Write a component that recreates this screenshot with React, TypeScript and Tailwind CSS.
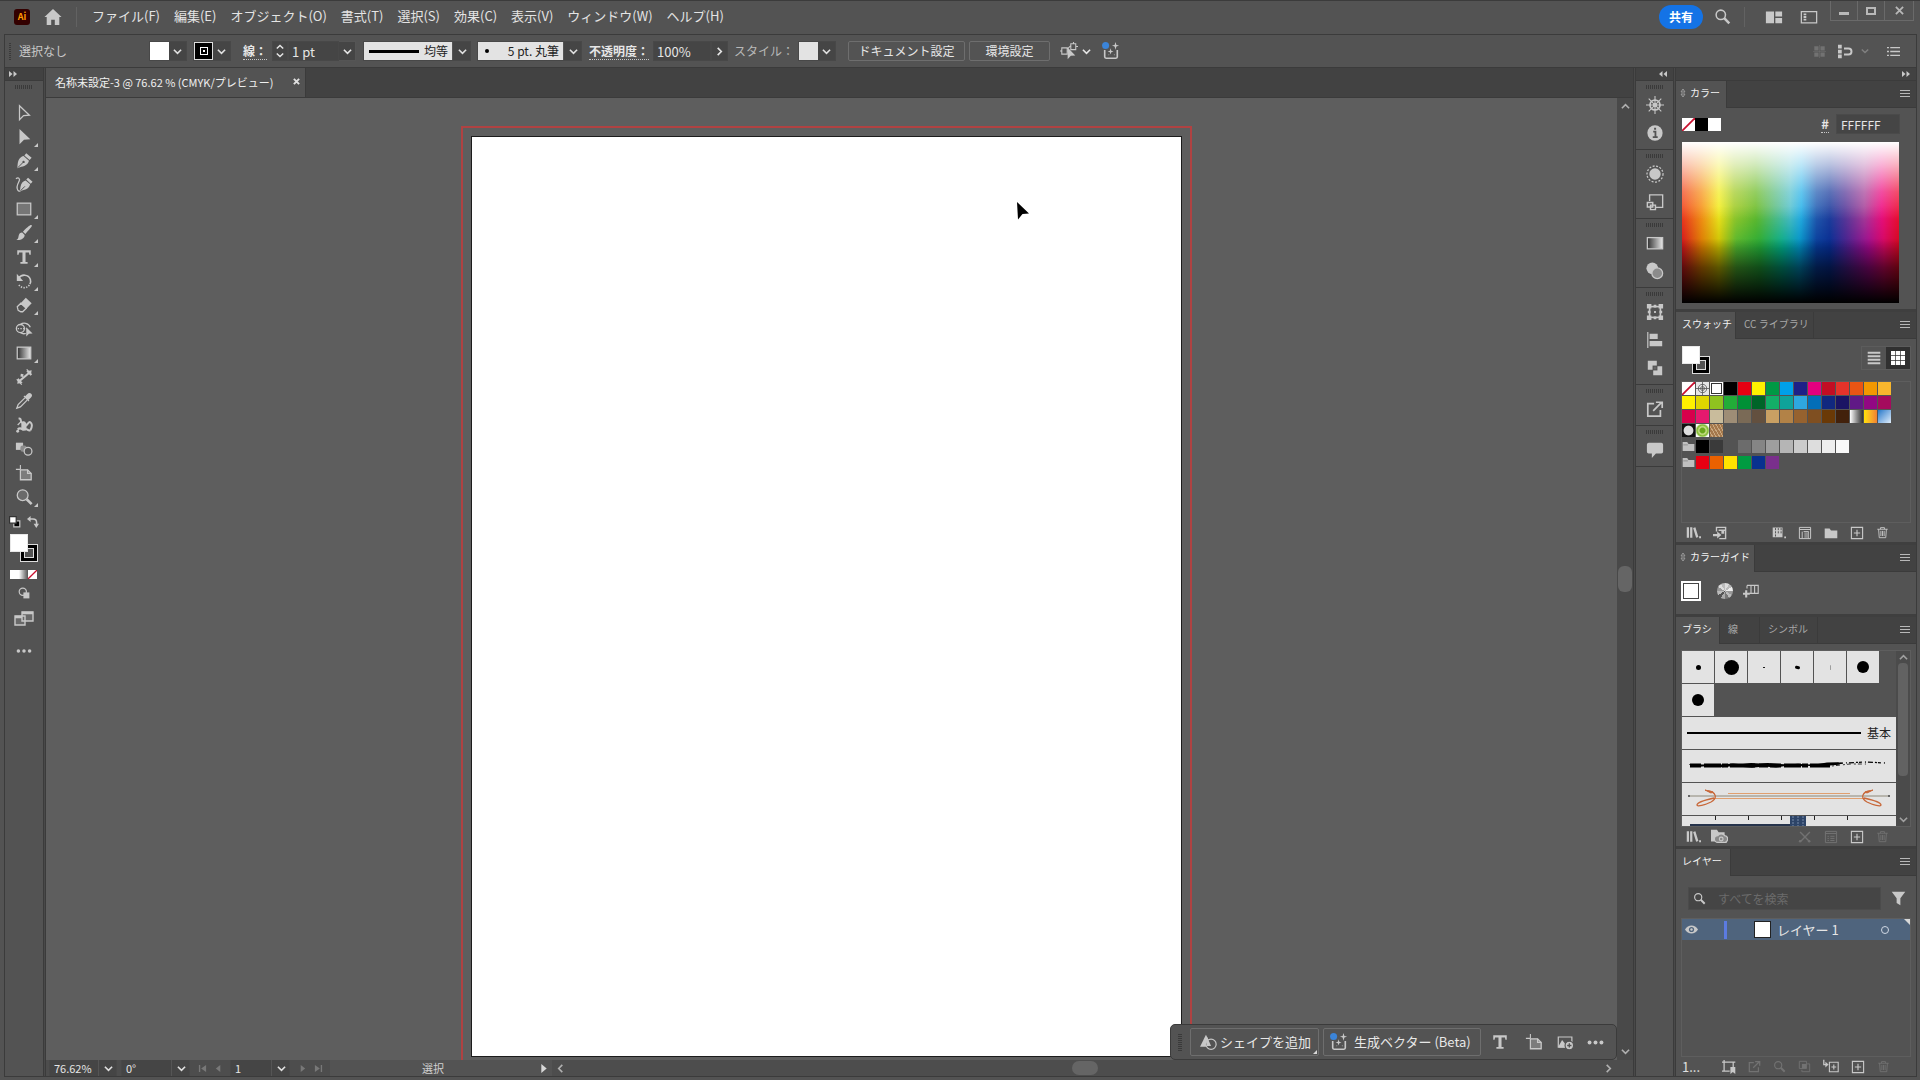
import React from "react";
import clsx from "clsx";

type Children = { children?: React.ReactNode };

/* ---------- icons ---------- */

function Icon({ children, size = 20, className }: Children & { size?: number; className?: string }) {
  return (
    <svg
      viewBox="0 0 20 20"
      width={size}
      height={size}
      fill="none"
      stroke="currentColor"
      strokeWidth="1.4"
      className={clsx("shrink-0", className)}
      aria-hidden="true"
    >
      {children}
    </svg>
  );
}

const solid = { fill: "currentColor", stroke: "none" };

function Chevron({ dir = "down", size = 9 }: { dir?: "down" | "up" | "left" | "right"; size?: number }) {
  const d = {
    down: "M1 3l4 4 4-4",
    up: "M1 7l4-4 4 4",
    left: "M7 1L3 5l4 4",
    right: "M3 1l4 4-4 4",
  }[dir];
  return (
    <svg viewBox="0 0 10 10" width={size} height={size} fill="none" stroke="currentColor" strokeWidth="1.8" className="shrink-0" aria-hidden="true">
      <path d={d} />
    </svg>
  );
}

function DoubleArrow({ left }: { left?: boolean }) {
  return (
    <svg viewBox="0 0 8 6" width="8" height="6" fill="#c8c8c8" aria-hidden="true">
      {left ? <path d="M3.5 0v6L0 3zM8 0v6L4.500 3z" /> : <path d="M0 0l3.500 3L0 6zM4.500 0L8 3 4.500 6z" />}
    </svg>
  );
}

const SearchIcon = (
  <>
    <circle cx="8" cy="8" r="5.5" strokeWidth="1.8" />
    <path d="M12 12l6 6" strokeWidth="3" />
  </>
);
const TypeIcon = <path {...solid} d="M2.500 2.500h15v5H16L15.500 5h-3.800v10.500H14V17.500H6v-2h2.300V5H4.500L4 7.500H2.500z" />;
const ArtboardIcon = (
  <>
    <path d="M6 1v5M1 6h5" strokeWidth="1.200" />
    <path d="M6 6.500h8l4 4v7H6z" fill="#7c7c7c" />
    <path d="M14 6.500v4h4" />
  </>
);
const Generative = (
  <>
    <path d="M3 9v7.500c0 1 .5 1.500 1.500 1.500h11c1 0 1.500-.5 1.500-1.500V9" strokeWidth="1.800" />
    <path {...solid} d="M15 0l1 3.200L19 4l-3 1-1 3.500L14 5l-3-1 3-.8zM9.500 7l.8 2.600 2.500.9-2.500.8-.8 2.700-.8-2.700-2.500-.8 2.500-.9zM7 14l.6 1 .6-1zM13 14l.8 1 .6-1z" />
    <circle cx="4" cy="4" r="3.900" fill="#3b84d8" stroke="none" />
  </>
);
const TrashIcon = (
  <path d="M2 5h16M7 5V2.500h6V5M4 5l1 13h10l1-13M7.500 7.500v8M10 7.500v8M12.500 7.500v8" />
);
const PlusBox = <path d="M2 2h16v16H2zM10 5.500v9M5.500 10h9" strokeWidth="1.600" />;
const FolderIcon = <path {...solid} d="M1 3.500h7l2 3h9v11H1z" />;
const LibraryIcon = (
  <path {...solid} d="M1 3h3v14H1zM5.500 3h3v14h-3zM9.500 4l3-1 4 13-3 1zM17.500 15h2.500v2.500h-2.500z" />
);
const ExportIcon = (
  <path d="M9 4H2v14h14v-7M8 12L17 3M11 2.500h7V9" strokeWidth="1.900" />
);

type Tool = { label: string; flyout?: boolean; art: React.ReactNode };

const tools: Tool[] = [
  { label: "選択ツール", art: <path d="M5 2l11 10.500-6.500.4L5 17.500z" /> },
  { label: "ダイレクト選択ツール", flyout: true, art: <path {...solid} d="M5 1l12 11.500-7 .5-5 5z" /> },
  {
    label: "ペンツール",
    flyout: true,
    art: (
      <>
        <path {...solid} d="M12.500 1.500l6 5-2.300 2.300-5.800-5zM9.500 4.500l6 5.300c-.6 3.200-3.500 6-8.500 6.700L2.500 18 3 13c.8-5 3.500-8 6.500-8.500z" />
        <path d="M3 17.500l6-6" stroke="#535353" strokeWidth="1.100" />
        <circle cx="9.500" cy="11" r="1.300" fill="#535353" stroke="none" />
      </>
    ),
  },
  {
    label: "曲線ツール",
    art: (
      <>
        <path {...solid} d="M14.500 2l5 4.500-2 2-5-4.500zM11.800 5l5 4.300c-.6 3-3 5.700-7.300 6.200L5.500 17 6 12.500C6.700 8 9 5.500 11.800 5z" />
        <path d="M6 16.500l5-5" stroke="#535353" strokeWidth="1.100" />
        <path d="M1 3c3-2 5 0 3.500 3S1 12 3 15.500c.8 1.500 2 1.500 3 1" />
      </>
    ),
  },
  { label: "長方形ツール", flyout: true, art: <rect x="2.500" y="3.500" width="15" height="13" fill="#767676" /> },
  {
    label: "ブラシツール",
    flyout: true,
    art: <path {...solid} d="M18.500 1.500c.8.8 0 2-7 9.500L8.800 8.500C16 1.500 17.700.7 18.500 1.500zM8 9.500l2.700 2.700c.2 3.500-3.700 6-9.200 5.500 2-1 2-2.200 2.500-4.500.5-2.500 2-3.800 4-3.700z" />,
  },
  { label: "文字ツール", flyout: true, art: TypeIcon },
  {
    label: "回転ツール",
    flyout: true,
    art: (
      <>
        <path d="M4 7c3-5 11-4.500 13 1 .7 2 .4 4-.5 5.500" strokeWidth="1.800" />
        <path d="M16 14.500c-3 4-9 4-12-.5" strokeWidth="1.800" strokeDasharray="1.500 1.500" />
        <path {...solid} d="M2 2v8h7z" />
      </>
    ),
  },
  {
    label: "消しゴムツール",
    flyout: true,
    art: (
      <>
        <path {...solid} d="M12 2l6.500 6-6 6.500L6 8.300z" />
        <path d="M6.500 8L2.500 12l1 4 3 1.500h2l4-4z" />
      </>
    ),
  },
  {
    label: "シェイプ形成ツール",
    art: (
      <>
        <circle cx="6" cy="9.500" r="4.500" />
        <path d="M6 5c3-2.500 9-2 11 3M6 14c2 1.500 4 1.500 6 1" />
        <path d="M3 9.500h10" strokeDasharray="1.500 1.500" />
        <path {...solid} d="M12.500 8l7 7-4 .3-3 3z" />
      </>
    ),
  },
  {
    label: "グラデーションツール",
    flyout: true,
    art: (
      <>
        <defs>
          <linearGradient id="toolGrad">
            <stop offset="0" stopColor="#303030" />
            <stop offset="1" stopColor="#e8e8e8" />
          </linearGradient>
        </defs>
        <rect x="2.500" y="3.500" width="15" height="13" fill="url(#toolGrad)" />
      </>
    ),
  },
  {
    label: "寸法ツール",
    art: (
      <>
        <path d="M5 14.500L15.500 5.500" strokeWidth="2.400" />
        <path {...solid} d="M18.500 2.500l-1 6.500-5-5.500zM2.500 17.500l1-6.500 5 5.500z" />
        <path d="M2 12.500l5.500 6M13 1.500l5.500 6" />
        <path {...solid} d="M6.500 6.500l3 .5-.5 3-3-.5z" />
      </>
    ),
  },
  {
    label: "スポイトツール",
    art: (
      <>
        <path {...solid} d="M18 2c1.500 1.500 1 3-.5 4.500L15 9l-4-4 2.500-2.500C15 1 16.500.5 18 2zM9.500 5l1-1L16 9.500l-1 1z" />
        <path d="M11 6.500L3.500 14l-1.500 4 4-1.500L13.500 9" />
      </>
    ),
  },
  {
    label: "パペットワープツール",
    art: (
      <>
        <path d="M4 3c4-1 1 5 5 4 3-1 2 4 4 3 2-2 3-5 5-2s0 6-1 8M3 15c4-4 5 2 8 0 2-2 3 2 6 1" strokeWidth="2.200" />
        <path {...solid} d="M7 7l4 1 2 4-1 4-5-1z" />
        <circle cx="3" cy="17" r="1.600" {...solid} />
        <path d="M3 10l4-4" />
      </>
    ),
  },
  {
    label: "ブレンドツール",
    art: (
      <>
        <path {...solid} d="M1 3h8v8H1z" />
        <rect x="6" y="6" width="7" height="7" rx="2.500" fill="#8c8c8c" stroke="none" />
        <circle cx="14.500" cy="12.500" r="4.300" fill="#535353" />
      </>
    ),
  },
  { label: "アートボードツール", art: ArtboardIcon },
  {
    label: "ズームツール",
    flyout: true,
    art: (
      <>
        <circle cx="8.500" cy="8" r="6" fill="#6a6a6a" />
        <path d="M13 12.500l5.500 5.500" strokeWidth="2.800" />
      </>
    ),
  },
];

const dockGroups: Tool[][] = [
  [
    {
      label: "オブジェクトを再配色",
      art: (
        <>
          <circle cx="10" cy="10" r="5.500" strokeWidth="2" />
          <circle cx="10" cy="10" r="1.800" />
          <path d="M10 0v20M0 10h20M3 3l14 14M17 3L3 17" strokeWidth="1.200" />
        </>
      ),
    },
    {
      label: "情報",
      art: (
        <>
          <circle cx="10" cy="10" r="8.500" {...solid} />
          <path d="M8 8.500h2.500V14M7.500 14.500h5.500M9 5.300h2.200" stroke="#535353" strokeWidth="2" />
        </>
      ),
    },
  ],
  [
    {
      label: "アピアランス",
      art: (
        <>
          <circle cx="10" cy="10" r="6.300" {...solid} />
          <circle cx="10" cy="10" r="8.900" strokeDasharray="2.200 1.700" />
        </>
      ),
    },
    {
      label: "グラフィックスタイル",
      art: (
        <>
          <path d="M4 9V2h14.500v14H11" strokeWidth="1.500" />
          <path d="M1.500 10.500h6v5h-6zM5 13.500h5.500v5H5z" strokeWidth="1.600" />
        </>
      ),
    },
  ],
  [
    { label: "グラデーション", art: <rect x="1.500" y="4" width="17" height="12.500" fill="url(#toolGrad)" /> },
    {
      label: "透明",
      art: (
        <>
          <circle cx="7" cy="7" r="6.500" {...solid} />
          <circle cx="12.500" cy="12.500" r="6" fill="#8b8b8b" />
        </>
      ),
    },
  ],
  [
    {
      label: "変形",
      art: (
        <>
          <rect x="4" y="4" width="12" height="12" strokeWidth="1.800" />
          <path {...solid} d="M1 1h5v5H1zM14 1h5v5h-5zM1 14h5v5H1zM14 14h5v5h-5zM8.500 2h3v3h-3zM8.500 15h3v3h-3zM2 8.500h3v3H2zM15 8.500h3v3h-3zM9 9h2v2H9z" />
        </>
      ),
    },
    {
      label: "整列",
      art: (
        <>
          <path d="M2 1v18" strokeWidth="1.300" />
          <path {...solid} d="M4 3h9v6H4zM4 11h14v6H4z" />
        </>
      ),
    },
    {
      label: "パスファインダー",
      art: (
        <>
          <path {...solid} d="M2 2h10v10H2zM8 8h10v10H8z" />
          <rect x="8" y="8" width="4" height="4" fill="#666" stroke="#535353" />
        </>
      ),
    },
  ],
  [{ label: "アセットの書き出し", art: ExportIcon }],
  [{ label: "コメント", art: <path {...solid} d="M3 2h14a2 2 0 012 2v8a2 2 0 01-2 2h-6l-4.500 5v-5H3a2 2 0 01-2-2V4a2 2 0 012-2z" /> }],
];

/* ---------- small parts ---------- */

function IconButton({ label, dim, children, size = 16, className }: Children & { label: string; dim?: boolean; size?: number; className?: string }) {
  return (
    <button type="button" aria-label={label} className={clsx("flex shrink-0 items-center justify-center", dim ? "text-[#727272]" : "text-[#c8c8c8]", className)}>
      <Icon size={size}>{children}</Icon>
    </button>
  );
}

function Grip({ vertical }: { vertical?: boolean }) {
  return (
    <div
      className={clsx(
        "shrink-0",
        vertical
          ? "h-[18px] w-1 bg-[repeating-linear-gradient(0deg,#3a3a3a_0_1px,transparent_1px_2px)]"
          : "h-1 w-[18px] bg-[repeating-linear-gradient(90deg,#3a3a3a_0_1px,transparent_1px_2px)]",
      )}
    />
  );
}

function SelectBox({ label, value, look = "dark", width, children }: Children & { label: string; value: string; look?: "dark" | "light" | "slim"; width: string }) {
  return (
    <div className={clsx("relative shrink-0 border-[#484848] bg-[#454545]", look === "slim" ? "h-4 border-x" : "h-5 border", width)}>
      <select
        aria-label={label}
        defaultValue={value}
        className={clsx(
          "block h-full w-[calc(100%-17px)] appearance-none border-r border-[#555] outline-none",
          look === "light" && "bg-[#e3e3e3] pr-1 text-right text-[12px] leading-[18px] text-[#222] [text-align-last:right]",
          look === "dark" && "pl-1 text-[12px] leading-[18px] text-[#e6e6e6]",
          look === "slim" && "pl-1 text-[11px] leading-4 text-[#e6e6e6]",
        )}
      >
        <option>{value}</option>
      </select>
      {children}
      <span className="pointer-events-none absolute inset-y-0 right-0 flex w-4 items-center justify-center text-[#e0e0e0]">
        <Chevron />
      </span>
    </div>
  );
}

function SwatchPicker({ label, children }: Children & { label: string }) {
  return (
    <button type="button" aria-label={label} className="flex h-5 w-[38px] shrink-0 border border-[#484848] bg-[#454545] text-[#e0e0e0]">
      <span className="flex h-full w-[19px] items-center justify-center">{children}</span>
      <span className="flex h-full flex-1 items-center justify-center">
        <Chevron />
      </span>
    </button>
  );
}

function FillStroke() {
  return (
    <div className="grid h-7 w-7 shrink-0 grid-cols-[10px_8px_10px] grid-rows-[10px_8px_10px]">
      <div className="col-start-2 col-end-4 row-start-2 row-end-4 border border-[#ddd] bg-black p-[3px]">
        <div className="h-full border border-[#ddd] bg-[#535353]" />
      </div>
      <div className="z-10 col-start-1 col-end-3 row-start-1 row-end-3 border border-[#e8e8e8] bg-white" />
    </div>
  );
}

function NoneSwatch({ className }: { className?: string }) {
  return (
    <svg viewBox="0 0 13 13" className={className} preserveAspectRatio="none" aria-hidden="true">
      <path fill="#fff" d="M0 0h13v13H0z" />
      <path d="M0 13L13 0" stroke="#c8102e" strokeWidth="1.800" />
    </svg>
  );
}

function PanelTabs({ tabs, arrows }: { tabs: { name: string; width: string }[]; arrows?: boolean }) {
  return (
    <div className="flex h-[27px] shrink-0 border-b border-[#3b3b3b] bg-[#424242]" role="tablist">
      {tabs.map((tab, i) => (
        <button
          key={tab.name}
          type="button"
          role="tab"
          aria-selected={i === 0}
          className={clsx(
            "flex h-[27px] shrink-0 items-center gap-1 whitespace-nowrap border-r border-[#3b3b3b] pb-1 text-[10px] leading-[14px]",
            i === 0 ? "bg-[#535353] text-[#f2f2f2]" : "pl-2 text-[#a8a8a8]",
            i === 0 && (arrows ? "pl-1" : "pl-[6px]"),
            tab.width,
          )}
        >
          {arrows && (
            <svg viewBox="0 0 6 10" width="6" height="10" fill="none" stroke="#9a9a9a" className="shrink-0" aria-hidden="true">
              <path d="M1 4l2-3 2 3zM1 6l2 3 2-3z" />
            </svg>
          )}
          {tab.name}
        </button>
      ))}
      <button type="button" aria-label="パネルメニュー" className="ml-auto mr-[6px] text-[#b8b8b8]">
        <svg viewBox="0 0 10 8" width="10" height="8" stroke="currentColor" aria-hidden="true">
          <path d="M0 .5h10M0 3.500h10M0 6.500h10" />
        </svg>
      </button>
    </div>
  );
}

/* ---------- top bars ---------- */

const menus = ["ファイル(F)", "編集(E)", "オブジェクト(O)", "書式(T)", "選択(S)", "効果(C)", "表示(V)", "ウィンドウ(W)", "ヘルプ(H)"];

function TitleBar() {
  return (
    <header className="flex h-[34px] shrink-0 items-center border-t border-[#3b3b3b] pb-[2px] pl-[14px]">
      <div className="flex h-4 w-4 items-center justify-center rounded-[3px] bg-[#330000] text-[9px] font-bold leading-4 text-[#ff9a00]">Ai</div>
      <button type="button" aria-label="ホーム" className="ml-[14px] text-[#c8c8c8]">
        <Icon size={18}>
          <path {...solid} d="M10 1L.5 10H3v9h5v-6h4v6h5v-9h2.500z" />
        </Icon>
      </button>
      <span className="ml-[14px] h-5 w-px bg-[#626262]" />
      <nav className="ml-2 flex pb-[2px]">
        {menus.map((m) => (
          <button key={m} type="button" className="whitespace-nowrap px-[7px] text-[13px] leading-5 text-[#e4e4e4]">
            {m}
          </button>
        ))}
      </nav>
      <div className="ml-auto flex h-full items-center">
        <button type="button" className="h-6 w-11 rounded-full bg-[#1473e6] text-[12px] font-bold leading-6 text-white">
          共有
        </button>
        <IconButton label="検索" size={17} className="ml-[11px]">{SearchIcon}</IconButton>
        <span className="ml-[13px] h-5 w-px bg-[#626262]" />
        <IconButton label="ドキュメントの配置" size={18} className="ml-5">
          <path {...solid} d="M1 4h9v13H1zM11.500 4H19v5.500h-7.500zM11.500 11H19v6h-7.500z" />
        </IconButton>
        <IconButton label="ワークスペース" size={18} className="ml-[17px]">
          <path d="M1.500 4h17v12.500h-17z" />
          <path {...solid} d="M4 6h3v2H4zM4 9h3v2H4zM4 12h3v2H4z" />
        </IconButton>
        <div className="ml-3 mr-[6px] flex h-5 self-start border border-t-0 border-[#6a6a6a] text-[#b8b8b8]">
          <button type="button" aria-label="最小化" className="flex w-[27px] items-center justify-center border-r border-[#6a6a6a]">
            <span className="mt-[6px] h-[3px] w-[10px] bg-[#b8b8b8]" />
          </button>
          <button type="button" aria-label="最大化" className="flex w-[27px] items-center justify-center border-r border-[#6a6a6a]">
            <span className="h-2 w-[10px] border-2 border-[#b8b8b8]" />
          </button>
          <button type="button" aria-label="閉じる" className="flex w-[28px] items-center justify-center">
            <svg viewBox="0 0 10 10" width="9" height="9" stroke="currentColor" strokeWidth="2" aria-hidden="true">
              <path d="M1 1l8 8M9 1L1 9" />
            </svg>
          </button>
        </div>
      </div>
    </header>
  );
}

function ControlBar() {
  return (
    <div className="flex h-[33px] shrink-0 items-center border-b border-[#3b3b3b] pl-1 text-[12px] leading-4 text-[#e6e6e6]">
      <div className="h-[18px] w-[2px] bg-[repeating-linear-gradient(0deg,#3a3a3a_0_1px,transparent_1px_2px)]" />
      <span className="ml-2 w-[130px] text-[#c8c8c8]">選択なし</span>
      <SwatchPicker label="塗り">
        <span className="h-full w-full bg-white" />
      </SwatchPicker>
      <span className="w-[6px]" />
      <SwatchPicker label="線">
        <span className="flex h-full w-full items-center justify-center border border-[#ddd] bg-black">
          <span className="h-2 w-2 border border-white p-[2px]">
            <span className="block h-full bg-white" />
          </span>
        </span>
      </SwatchPicker>
      <label htmlFor="weight" className="ml-3 whitespace-nowrap border-b border-dotted border-[#c8c8c8] font-bold">
        線：
      </label>
      <div className="ml-[5px] flex h-5 w-4 flex-col items-center justify-center border border-[#484848] bg-[#454545]">
        <Chevron dir="up" size={8} />
        <Chevron size={8} />
      </div>
      <div className="mr-[7px] flex">
        <input id="weight" defaultValue="1 pt" className="h-5 w-[51px] border border-[#484848] bg-[#454545] pl-[3px] text-[13px] outline-none" />
        <button type="button" aria-label="線幅の一覧" className="flex h-5 w-[17px] items-center justify-center border border-l-0 border-[#555] bg-[#454545]">
          <Chevron />
        </button>
      </div>
      <SelectBox label="可変線幅プロファイル" value="均等" look="light" width="w-[108px]">
        <span className="pointer-events-none absolute left-[5px] top-2 h-[3px] w-[50px] bg-black" />
      </SelectBox>
      <span className="w-[6px]" />
      <SelectBox label="ブラシ定義" value="5 pt. 丸筆" look="light" width="w-[105px]">
        <span className="pointer-events-none absolute left-[7px] top-[7px] h-1 w-1 rounded-full bg-black" />
      </SelectBox>
      <label htmlFor="opacity" className="ml-[7px] whitespace-nowrap border-b border-dotted border-[#c8c8c8] font-bold">
        不透明度：
      </label>
      <input id="opacity" defaultValue="100%" className="ml-1 h-5 w-[58px] border border-[#484848] bg-[#454545] pl-[3px] text-[13px] outline-none" />
      <button type="button" aria-label="不透明度のスライダー" className="flex h-5 w-[17px] items-center justify-center border border-[#484848] bg-[#454545]">
        <Chevron dir="right" />
      </button>
      <span className="ml-[6px] mr-1 whitespace-nowrap text-[#b8b8b8]">スタイル：</span>
      <SwatchPicker label="スタイル">
        <span className="h-full w-full bg-[#e3e3e3]" />
      </SwatchPicker>
      <button type="button" className="ml-3 h-5 w-[117px] whitespace-nowrap rounded-[2px] border border-[#6e6e6e] leading-[18px]">
        ドキュメント設定
      </button>
      <button type="button" className="ml-1 h-5 w-[81px] whitespace-nowrap rounded-[2px] border border-[#6e6e6e] leading-[18px]">
        環境設定
      </button>
      <IconButton label="共通オブジェクトを選択" size={18} className="ml-[10px]">
        <path d="M2 6.500h6v7H2zM12 2h5.500v6.500H12zM8 8l4-4M0 10h2M15 0v2M17 5h3M8 10h3" strokeWidth="1.200" />
        <path {...solid} d="M8.500 6l8.500 9-5 .3-3.500 4z" />
      </IconButton>
      <button type="button" aria-label="選択オプション" className="flex w-4 items-center justify-center">
        <Chevron />
      </button>
      <IconButton label="生成" size={18} className="ml-2">{Generative}</IconButton>

      <div className="ml-auto mr-4 flex items-center">
        <IconButton label="ピクセルにスナップ" dim size={13}>
          <path {...solid} d="M2 2h6.500v6.500H2zM11.500 2H18v6.500h-6.500zM2 11.500h6.500V18H2zM11.500 11.500H18V18h-6.500z" />
          <path d="M10 0v20M0 10h20" strokeWidth=".8" />
        </IconButton>
        <IconButton label="ポイントにスナップ" size={15} className="ml-3">
          <path {...solid} d="M0 1h5v5H0zM0 7.500h5v5H0zM0 14h5v5H0z" />
          <path d="M8 6h6a4 4 0 010 8H8" strokeWidth="2.600" />
        </IconButton>
        <button type="button" aria-label="スナップのオプション" className="ml-2 flex w-2 justify-center text-[#808080]">
          <Chevron size={8} />
        </button>
        <IconButton label="コントロールメニュー" size={13} className="ml-[18px]">
          <path d="M0 4h3M5 4h15M0 10h3M5 10h15M0 16h3M5 16h15" strokeWidth="2" />
        </IconButton>
      </div>
    </div>
  );
}

/* ---------- left tools ---------- */

function Toolbox() {
  return (
    <aside className="flex w-[38px] shrink-0 flex-col">
      <div className="flex h-[13px] shrink-0 items-center border-b border-[#3b3b3b] bg-[#424242] pl-1">
        <DoubleArrow />
      </div>
      <div className="flex justify-center pb-3 pt-1">
        <Grip />
      </div>
      {tools.map((t) => (
        <button key={t.label} type="button" aria-label={t.label} className="relative flex h-6 w-full shrink-0 items-center justify-center text-[#c8c8c8]">
          <Icon size={18}>{t.art}</Icon>
          {t.flyout && (
            <svg viewBox="0 0 4 4" width="4" height="4" fill="#c8c8c8" className="absolute bottom-[2px] right-[5px]" aria-hidden="true">
              <path d="M4 0v4H0z" />
            </svg>
          )}
        </button>
      ))}
      <div className="flex items-center justify-between px-1 pt-[7px]">
        <IconButton label="初期設定の塗りと線" size={12}>
          <path d="M8 8h10v10H8z" fill="#000" strokeWidth="2" />
          <path d="M1 1h11v11H1z" fill="#fff" stroke="#333" strokeWidth="2" />
        </IconButton>
        <IconButton label="塗りと線を入れ替え" size={12}>
          <path d="M4 5h6c4 0 6 2 6 6v4" strokeWidth="2.600" />
          <path {...solid} d="M6 0v10L0 5zM11 13h9l-4.500 7z" />
        </IconButton>
      </div>
      <div className="mt-[6px] pl-[5px]">
        <FillStroke />
      </div>
      <div className="mt-2 flex pl-[5px]">
        <button type="button" aria-label="カラー" className="h-[9px] w-[9px] bg-white" />
        <button type="button" aria-label="グラデーション" className="h-[9px] w-[9px] bg-linear-to-r from-white to-[#555]" />
        <button type="button" aria-label="なし" className="h-[9px] w-[9px]">
          <NoneSwatch className="h-full w-full" />
        </button>
      </div>
      <IconButton label="描画方法" size={12} className="mt-2">
        <circle cx="8" cy="8" r="6" strokeWidth="2" />
        <path {...solid} d="M9 9h10v10H9z" />
      </IconButton>
      <IconButton label="スクリーンモード" size={20} className="mt-[9px]">
        <path d="M1 8h10v9H1zM8 4h11v9H8z" fill="#686868" />
        <path d="M8 5h11M1 9h7" strokeWidth="2.400" />
      </IconButton>
      <IconButton label="ツールバーを編集" size={16} className="mt-[15px]">
        <circle cx="3" cy="10" r="2.200" {...solid} />
        <circle cx="10" cy="10" r="2.200" {...solid} />
        <circle cx="17" cy="10" r="2.200" {...solid} />
      </IconButton>
    </aside>
  );
}

/* ---------- document ---------- */

function TaskBar() {
  return (
    <div className="absolute bottom-0 right-0 flex h-9 items-center rounded-[5px] border border-[#3b3b3b] bg-[#535353] pl-[7px] pr-3 text-[13px] text-[#e8e8e8]">
      <Grip vertical />
      <button type="button" className="relative ml-2 flex h-7 w-[129px] items-center gap-[3px] whitespace-nowrap rounded-[2px] border border-[#6e6e6e] pl-[9px]">
        <Icon size={17} className="text-[#c8c8c8]">
          <path {...solid} d="M7 1l7 14H0z" />
          <circle cx="13" cy="12" r="6" fill="#535353" />
          <path {...solid} d="M8 2.500L13 14H8z" />
        </Icon>
        シェイプを追加
        <svg viewBox="0 0 4 4" width="4" height="4" fill="#d8d8d8" className="absolute bottom-px right-px" aria-hidden="true">
          <path d="M4 0v4H0z" />
        </svg>
      </button>
      <button type="button" className="ml-1 flex h-7 w-[158px] items-center gap-[6px] whitespace-nowrap rounded-[2px] border border-[#6e6e6e] pl-[6px]">
        <Icon size={18} className="text-[#c8c8c8]">{Generative}</Icon>
        生成ベクター (Beta)
      </button>
      <IconButton label="文字" size={18} className="ml-[10px]">{TypeIcon}</IconButton>
      <IconButton label="アートボード" size={18} className="ml-4">{ArtboardIcon}</IconButton>
      <IconButton label="画像を配置" size={17} className="ml-[14px]">
        <path d="M1.500 3.500h16v12h-16z" />
        <path {...solid} d="M2 14l4-7 4 5 3-3 5 2v5H2z" />
        <circle cx="14.500" cy="13.500" r="5" fill="#c8c8c8" stroke="#535353" />
        <path d="M14.500 11v5M12 13.500h5" stroke="#535353" strokeWidth="1.600" />
      </IconButton>
      <IconButton label="その他" size={17} className="ml-[13px]">
        <circle cx="3" cy="10" r="2.300" {...solid} />
        <circle cx="10" cy="10" r="2.300" {...solid} />
        <circle cx="17" cy="10" r="2.300" {...solid} />
      </IconButton>
    </div>
  );
}

function NavIcon({ label, d }: { label: string; d: string }) {
  return (
    <button type="button" aria-label={label} className="flex w-4 items-center justify-center text-[#787878]">
      <svg viewBox="0 0 10 10" width="9" height="9" fill="currentColor" aria-hidden="true">
        <path d={d} />
      </svg>
    </button>
  );
}

function StatusBar() {
  return (
    <div className="flex h-4 shrink-0 items-stretch bg-[#4d4d4d] text-[#e0e0e0]">
      <div className="flex gap-1 pl-[3px]">
        <SelectBox label="ズーム" value="76.62%" look="slim" width="w-[68px]" />
        <SelectBox label="カンバス回転" value="0°" look="slim" width="w-[69px]" />
      </div>
      <div className="flex px-1">
        <NavIcon label="最初" d="M1 1h1.500v8H1zM9 1v8L3.500 5z" />
        <NavIcon label="前へ" d="M7 1v8L2 5z" />
      </div>
      <SelectBox label="アートボード番号" value="1" look="slim" width="w-[60px]" />
      <div className="flex px-1">
        <NavIcon label="次へ" d="M3 1v8l5-4z" />
        <NavIcon label="最後" d="M1 1v8l5.500-4zM7.500 1H9v8H7.500z" />
      </div>
      <div className="flex w-[206px] items-center justify-center bg-[#535353] text-[11px] leading-4 text-[#d0d0d0]">選択</div>
      <button type="button" aria-label="ステータス表示" className="flex w-4 items-center justify-center bg-[#535353]">
        <svg viewBox="0 0 6 10" width="6" height="9" fill="#d8d8d8" aria-hidden="true">
          <path d="M0 0l6 5-6 5z" />
        </svg>
      </button>
      <div className="flex flex-1 items-center justify-between pl-1 pr-[20px] text-[#b0b0b0]">
        <Chevron dir="left" />
        <span className="h-[14px] w-[26px] rounded-full bg-[#656565]" />
        <Chevron dir="right" />
      </div>
    </div>
  );
}

function DocumentArea() {
  return (
    <main className="flex min-w-0 flex-1 flex-col">
      <div className="flex h-[30px] shrink-0 border-b border-[#3b3b3b] bg-[#424242]">
        <div className="flex h-[29px] w-[260px] items-center justify-between border-r border-[#3b3b3b] bg-[#535353] pb-[2px] pl-[9px] pr-[5px] text-[11px] leading-4 text-[#f0f0f0]">
          <span className="whitespace-nowrap">名称未設定-3 @ 76.62 % (CMYK/プレビュー)</span>
          <button type="button" aria-label="タブを閉じる">
            <svg viewBox="0 0 8 8" width="7" height="7" stroke="#e0e0e0" strokeWidth="2.200" aria-hidden="true">
              <path d="M1 1l6 6M7 1L1 7" />
            </svg>
          </button>
        </div>
      </div>
      <div className="flex min-h-0 flex-1">
        <div className="relative min-w-0 flex-1 overflow-hidden bg-[#5e5e5e]">
          <div className="absolute left-[425px] top-[38px] h-[921px] w-[711px] border border-[#1c1c1c] bg-white" />
          <div className="absolute left-[415px] top-[28px] h-[942px] w-[731px] border-2 border-[#b04242]" />
          <svg viewBox="0 0 12 18" width="12" height="18" className="absolute left-[971px] top-[104px]" aria-hidden="true">
            <path d="M0 0l12 11.500-6.500.5L1 17.500z" fill="#000" />
          </svg>
          <TaskBar />
        </div>
        <div className="flex w-4 shrink-0 flex-col items-center justify-between bg-[#494949] py-1 text-[#b0b0b0]">
          <Chevron dir="up" />
          <span className="h-[26px] w-[14px] rounded-[6px] bg-[#656565]" />
          <Chevron />
        </div>
      </div>
      <StatusBar />
    </main>
  );
}

/* ---------- right side ---------- */

function Dock() {
  return (
    <aside className="flex w-[37px] shrink-0 flex-col">
      <div className="flex h-[13px] shrink-0 items-center justify-end border-b border-[#3b3b3b] bg-[#424242] pr-[6px]">
        <DoubleArrow left />
      </div>
      {dockGroups.map((group, i) => (
        <div key={i} className="flex flex-col items-center border-b border-[#3b3b3b] pb-[2px] pt-1">
          <Grip />
          <div className="h-[2px]" />
          {group.map((t) => (
            <IconButton key={t.label} label={t.label} size={18} className="h-7 w-full">
              {t.art}
            </IconButton>
          ))}
        </div>
      ))}
    </aside>
  );
}

function ColorPanel() {
  return (
    <section className="border-b-[3px] border-[#3f3f3f]">
      <PanelTabs arrows tabs={[{ name: "カラー", width: "w-[51px]" }]} />
      <div className="px-[6px] pb-[6px] pt-[6px]">
        <div className="flex items-center">
          <div className="flex h-[13px] w-[39px]">
            <NoneSwatch className="h-[13px] w-[13px]" />
            <span className="h-[13px] w-[13px] bg-black" />
            <span className="h-[13px] w-[13px] bg-white" />
          </div>
          <label htmlFor="hex" className="ml-auto mr-[7px] border-b border-dotted border-[#c8c8c8] text-[13px] font-bold leading-4 text-[#e6e6e6]">
            #
          </label>
          <input id="hex" defaultValue="FFFFFF" className="mr-[10px] h-5 w-16 border border-[#4a4a4a] bg-[#454545] pl-1 text-[12px] text-[#e6e6e6] outline-none" />
        </div>
        <div className="relative mr-[11px] mt-2 h-[161px] bg-[linear-gradient(90deg,#f2451f_0%,#f7941d_9%,#f3ee26_17%,#a4cc2b_24%,#6fbd2c_34%,#63c08a_43%,#5cc4d0_50%,#2fb4ea_55%,#2a62b4_62%,#2443a0_68%,#5a3f9c_75%,#a8489c_84%,#ee1283_92%,#ee1133_100%)]">
          <div className="absolute inset-0 bg-[linear-gradient(90deg,#d0121c_0%,#d87a00_9%,#c8bc00_17%,#4fb42f_25%,#22a838_36%,#00a884_46%,#008fc0_54%,#063a98_62%,#062c90_68%,#4a1e8c_76%,#a0088a_86%,#d00860_93%,#d00820_100%)] mask-[linear-gradient(180deg,transparent_40%,#000_66%)]" />
          <div className="absolute inset-0 bg-[linear-gradient(180deg,#fff_0%,rgba(255,255,255,0.68)_14%,rgba(255,255,255,0.25)_31%,transparent_48%,transparent_60%,rgba(0,0,0,0.55)_78%,#000_100%)]" />
        </div>
      </div>
    </section>
  );
}

const swatchRows: string[][] = [
  ["none", "reg", "#fff", "#000000", "#e60012", "#fff100", "#009944", "#00a0e9", "#1d2088", "#e4007f", "#c30d23", "#e5332a", "#ea5514", "#f39800", "#f8b62d"],
  ["#fff100", "#dfd600", "#8fc31f", "#22ac38", "#009036", "#006428", "#13ae67", "#0fa39a", "#2ea7e0", "#036eb8", "#11287f", "#1b1464", "#601986", "#920783", "#a40b5d"],
  ["#d7004b", "#e5196e", "#c9bc9c", "#9e8d76", "#7a6a56", "#63503f", "#c9a063", "#b28247", "#96622f", "#7f4f21", "#6a3906", "#42210b", "fade", "sun", "sky"],
];
const greys = ["#000000", "#3a3a3a", "#535353", "#6c6c6c", "#858585", "#9e9e9e", "#b5b5b5", "#cbcbcb", "#dddddd", "#eeeeee", "#f9f9f9"];
const brights = ["#e60012", "#eb6100", "#ffe100", "#009b41", "#08318f", "#7a2f8c"];

function Swatch({ color }: { color: string }) {
  if (color === "none") return <NoneSwatch className="h-[13px] w-[13px]" />;
  if (color === "reg")
    return (
      <svg viewBox="0 0 13 13" className="h-[13px] w-[13px] bg-[#e6e6e6]" fill="none" stroke="#555" strokeWidth=".8" aria-hidden="true">
        <circle cx="6.500" cy="6.500" r="4.200" />
        <circle cx="6.500" cy="6.500" r="2" />
        <path d="M6.500 0v13M0 6.500h13" />
      </svg>
    );
  if (color === "#fff") return <span className="h-[13px] w-[13px] border border-white bg-white outline-1 -outline-offset-2 outline-[#333]" />;
  if (color === "fade") return <span className="h-[13px] w-[13px] bg-linear-to-r from-white to-[#333]" />;
  if (color === "sun") return <span className="h-[13px] w-[13px] bg-linear-to-r from-[#ffe100] to-[#f08030]" />;
  if (color === "sky") return <span className="h-[13px] w-[13px] bg-linear-to-br from-[#1d78c8] to-[#e0eefa]" />;
  return <span className="h-[13px] w-[13px]" style={{ backgroundColor: color }} />;
}

function SwatchFolder({ colors }: { colors: string[] }) {
  return (
    <div className="mt-[3px] flex gap-px">
      <Icon size={13} className="text-[#c0c0c0]">
        <path {...solid} d="M1 3h7l2 3h9v11H1z" />
        <path d="M2 7.500h7" stroke="#777" strokeWidth="1" />
      </Icon>
      {colors.map((c) => (
        <Swatch key={c} color={c} />
      ))}
    </div>
  );
}

function SwatchPanel() {
  return (
    <section className="border-b-[3px] border-[#3f3f3f]">
      <PanelTabs
        tabs={[
          { name: "スウォッチ", width: "w-[60px]" },
          { name: "CC ライブラリ", width: "w-[78px]" },
        ]}
      />
      <div className="px-[5px] pt-[7px]">
        <div className="flex items-start justify-between pl-px">
          <FillStroke />
          <div className="flex h-6 border border-[#5c5c5c]">
            <IconButton label="リスト表示" size={14} className="w-6">
              <path d="M1 2.500h18M1 7.500h18M1 12.500h18M1 17.500h18" strokeWidth="2.600" />
            </IconButton>
            <button type="button" aria-label="サムネール表示" className="flex w-6 items-center justify-center bg-[#303030] text-white">
              <Icon size={14}>
                <path {...solid} d="M0 0h6v6H0zM7 0h6v6H7zM14 0h6v6h-6zM0 7h6v6H0zM7 7h6v6H7zM14 7h6v6h-6zM0 14h6v6H0zM7 14h6v6H7zM14 14h6v6h-6z" />
              </Icon>
            </button>
          </div>
        </div>
        <div className="mt-[7px] h-[142px] border border-[#5e5e5e]">
          <div className="flex flex-col gap-px">
            {swatchRows.map((row, i) => (
              <div key={i} className="flex gap-px">
                {row.map((c) => (
                  <Swatch key={c} color={c} />
                ))}
              </div>
            ))}
            <div className="flex gap-px">
              <span className="h-[13px] w-[13px] bg-[radial-gradient(circle,#ddd_48%,#111_58%)]" />
              <span className="h-[13px] w-[13px] bg-[radial-gradient(circle,#6aa81c_25%,#c8e08a_40%,#7cb828_60%,#fff_80%)]" />
              <span className="h-[13px] w-[13px] bg-[repeating-linear-gradient(60deg,#a5784c_0_2px,#c9a880_2px_3px)]" />
            </div>
          </div>
          <SwatchFolder colors={greys} />
          <SwatchFolder colors={brights} />
        </div>
        <div className="flex h-[19px] items-center pl-[5px] pr-[22px] text-[#c8c8c8]">
          <IconButton label="スウォッチライブラリ" size={15}>{LibraryIcon}</IconButton>
          <IconButton label="ライブラリに追加" size={14} className="ml-3">
            <path d="M5 8V2h13v16H9M18 6H8" strokeWidth="2" />
            <path {...solid} d="M6 8l6 5-6 5v-3.500H0v-3h6zM12 7h4v4h-4z" />
          </IconButton>
          <div className="ml-auto flex gap-3">
            <IconButton label="スウォッチの種類" size={14}>
              <path {...solid} d="M1 2h14v14H1zM17.500 15H20v2.500h-2.500z" />
              <path d="M5 3v3M9 3v3M13 3v3M5 7.500v3M9 7.500v3M13 7.500v3M5 12v3" stroke="#535353" strokeWidth="1.400" />
            </IconButton>
            <IconButton label="スウォッチオプション" size={14}>
              <path d="M2 2h16v16H2zM2 5h16M6 8v10M8 8h7v10" />
              <path d="M9 9h6v8H9z" fill="#8a8a8a" stroke="none" />
            </IconButton>
            <IconButton label="新規カラーグループ" size={14}>{FolderIcon}</IconButton>
            <IconButton label="新規スウォッチ" size={14}>{PlusBox}</IconButton>
            <IconButton label="スウォッチを削除" size={13}>{TrashIcon}</IconButton>
          </div>
        </div>
      </div>
    </section>
  );
}

function ColorGuidePanel() {
  return (
    <section className="border-b-[3px] border-[#3f3f3f]">
      <PanelTabs arrows tabs={[{ name: "カラーガイド", width: "w-[79px]" }]} />
      <div className="flex h-[42px] items-center px-[5px] pb-1">
        <button type="button" aria-label="ベースカラー" className="h-5 w-5 border-2 border-white bg-white p-0">
          <span className="block h-4 w-4 border border-[#444]" />
        </button>
        <button type="button" aria-label="カラーを編集" className="ml-4 h-4 w-4 rounded-full bg-[conic-gradient(#ddd_0_30deg,#bbb_30deg_60deg,#eee_60deg_90deg,#999_90deg_120deg,#bbb_120deg_150deg,#777_150deg_180deg,#aaa_180deg_210deg,#555_210deg_240deg,#bbb_240deg_270deg,#999_270deg_300deg,#ddd_300deg_330deg,#bbb_330deg)]" />
        <IconButton label="グループを保存" size={16} className="ml-[10px]">
          <path d="M5 3h14v10H8M10 3v10M14.500 3v10M5 3v4" />
          <path d="M4 9v9M0 13.500h8.500" strokeWidth="2.600" />
        </IconButton>
      </div>
    </section>
  );
}

const brushDots = ["h-[5px] w-[5px]", "h-[15px] w-[15px]", "h-px w-[2px]", "h-[3px] w-[5px] rotate-12", "h-[5px] w-px opacity-30", "h-3 w-3", "h-3 w-3"];

function BrushPanel() {
  return (
    <section className="border-b-[3px] border-[#3f3f3f]">
      <PanelTabs
        tabs={[
          { name: "ブラシ", width: "w-[44px]" },
          { name: "線", width: "w-[40px]" },
          { name: "シンボル", width: "w-[58px]" },
        ]}
      />
      <div className="px-[5px] pt-[6px]">
        <div className="flex h-[177px] border border-[#5e5e5e]">
          <div className="flex-1 overflow-hidden">
            <div className="flex flex-wrap gap-px pb-px">
              {brushDots.map((dot, i) => (
                <span key={i} className="flex h-8 w-8 items-center justify-center bg-[#e3e3e3]">
                  <span className={clsx("rounded-full bg-black", dot)} />
                </span>
              ))}
            </div>
            <div className="flex h-8 items-center gap-[6px] bg-[#e3e3e3] px-[5px] text-[12px] leading-4 text-[#222]">
              <span className="h-[2px] flex-1 bg-black" />
              基本
            </div>
            <svg viewBox="0 0 214 32" className="mt-px block h-8 w-full bg-[#e3e3e3]" preserveAspectRatio="none" aria-hidden="true">
              <path d="M7 14l14 .5 10-.5 8 .5 12-1 8 .8 10-1.300 9 .6 8-.6 12 1 9 .6 9-.8 9 .8 11-.6 9-1.400 10-.4 6 .6-4 2-9 .8-11 1.400-12-1.200-10 .6-12-.4-9 1.600-12-1-12 1.200-9-.8-11-.8-10 1-12-1.400-10 1-10-1.600z" />
              <path d="M8 15.500h140" fill="none" stroke="#000" strokeWidth="4" strokeDasharray="11 3 17 1 6 2 25 4 9 2" />
              <path d="M148 14l14-1 22-1 19 1" fill="none" stroke="#000" strokeWidth="1.300" strokeDasharray="5 2 2 1 3 3 1 2" />
              <path d="M150 16l18-2 16 0" fill="none" stroke="#333" strokeDasharray="2 2 4 3" />
            </svg>
            <svg viewBox="0 0 214 32" className="mt-px block h-8 w-full bg-[#e3e3e3]" fill="none" stroke="#c8683a" preserveAspectRatio="none" aria-hidden="true">
              <path d="M7 13h200" stroke="#8d8878" />
              <path d="M46 10.500h122M32 15.500h150" stroke="#e0a070" />
              <path d="M26 8c8 1 10 7 3 11-6 3-14 5-14 3 0-3 8-5 17-7M188 8c-8 1-10 7-3 11 6 3 14 5 14 3 0-3-8-5-17-7" strokeWidth="1.300" />
              <path d="M23 7l8 2-2 1zM191 7l-8 2 2 1z" fill="#c8683a" />
              <path d="M7 12v2M207 12v2" stroke="#666" strokeWidth="2" />
            </svg>
            <svg viewBox="0 0 214 11" className="mt-px block h-[11px] w-full bg-[#e3e3e3]" aria-hidden="true">
              <path d="M8 8h100v3H8z" fill="#26344c" />
              <path d="M108 0h16v11h-16z" fill="#2d4468" />
              <path d="M111 0v11M116 0v11M121 0v11" stroke="#8aa0bd" strokeWidth=".8" strokeDasharray="2 1" />
              <path d="M33.500 0v4M66.500 0v4M99.500 0v4M132.500 0v4M165.500 0v4" stroke="#222" />
            </svg>
          </div>
          <div className="flex w-[14px] flex-col items-center bg-[#4b4b4b] py-[2px] text-[#a0a0a0]">
            <Chevron dir="up" />
            <span className="my-px w-[10px] flex-[114] rounded-[4px] bg-[#626262]" />
            <span className="flex-[38]" />
            <Chevron />
          </div>
        </div>
        <div className="flex h-[19px] items-center pl-[5px] pr-[22px]">
          <IconButton label="ブラシライブラリ" size={15}>{LibraryIcon}</IconButton>
          <IconButton label="CC ライブラリ" size={17} className="ml-[10px]">
            <path {...solid} d="M0 2h7l2 3h7v11H0z" />
            <path d="M8 17a4 4 0 010-8 5 5 0 018 0 4 4 0 01-1 8z" fill="#888" />
            <circle cx="12" cy="13" r="2.200" />
          </IconButton>
          <div className="ml-auto flex gap-3">
            <IconButton label="ブラシストロークを削除" dim size={14}>
              <path d="M3 3l13 13M17 3L4 16" strokeWidth="2" />
              <circle cx="3" cy="16" r="1.800" {...solid} />
              <circle cx="16" cy="16" r="1.800" {...solid} />
            </IconButton>
            <IconButton label="ブラシオプション" dim size={14}>
              <path d="M2 2h16v16H2zM2 5h16M5 9h2M9 9h6M5 12h2M9 12h6M5 15h2M9 15h6" />
            </IconButton>
            <IconButton label="新規ブラシ" size={14}>{PlusBox}</IconButton>
            <IconButton label="ブラシを削除" dim size={13}>{TrashIcon}</IconButton>
          </div>
        </div>
      </div>
    </section>
  );
}

function LayersPanel() {
  return (
    <section className="flex min-h-0 flex-1 flex-col">
      <PanelTabs tabs={[{ name: "レイヤー", width: "w-[55px]" }]} />
      <div className="flex items-center pb-2 pl-3 pr-[10px] pt-[11px]">
        <div className="flex h-[23px] flex-1 items-center border border-[#4b4b4b] bg-[#454545] pl-1 text-[#c8c8c8]">
          <Icon size={13}>{SearchIcon}</Icon>
          <input
            type="search"
            aria-label="すべてを検索"
            placeholder="すべてを検索"
            className="ml-3 w-0 flex-1 bg-transparent text-[12px] leading-4 outline-none placeholder:text-[#6b6b6b]"
          />
        </div>
        <IconButton label="フィルター" size={15} className="ml-[10px]">
          <path {...solid} d="M1 1h18l-6.500 8.500V19l-5-3V9.500z" />
        </IconButton>
      </div>
      <div className="mx-[5px] min-h-0 flex-1 border border-[#5e5e5e]">
        <div className="relative flex h-[21px] items-center bg-[#4f647d] pl-[3px]">
          <button type="button" aria-label="表示の切り替え" className="text-[#c8c8c8]">
            <svg viewBox="0 0 13 9" width="13" height="9" aria-hidden="true">
              <path d="M0 4.500C3-.8 10-.8 13 4.500 10 9.800 3 9.800 0 4.500z" fill="currentColor" />
              <circle cx="6.500" cy="4.500" r="2.600" fill="#4f647d" />
              <circle cx="6.500" cy="4.500" r="1.200" fill="currentColor" />
            </svg>
          </button>
          <span className="ml-[26px] h-[18px] w-[3px] bg-[#5b7be0]" />
          <span className="ml-[27px] h-[17px] w-[17px] border border-[#222] bg-white" />
          <span className="ml-[6px] text-[13px] leading-4 text-[#e6e6e6]">レイヤー 1</span>
          <span className="ml-auto mr-[21px] h-2 w-2 rounded-full border border-[#d0d8e4]" />
          <svg viewBox="0 0 6 6" width="6" height="6" fill="#d8d8d8" className="absolute right-0 top-0" aria-hidden="true">
            <path d="M0 0h6v6z" />
          </svg>
        </div>
      </div>
      <div className="flex h-[19px] items-center pl-[6px] pr-[26px] text-[13px] leading-4 text-[#e0e0e0]">
        1...
        <div className="ml-auto flex items-center gap-3">
          <IconButton label="書き出し用に追加" size={14}>
            <path d="M3 3h13v9M3 3v13h8M0 3h6M3 0v6M13 3h6M0 16h6" strokeWidth="1.800" />
            <path {...solid} d="M12 10h7v10l-3.500-3-3.500 3z" />
          </IconButton>
          <IconButton label="アセットの書き出し" dim size={13}>{ExportIcon}</IconButton>
          <IconButton label="オブジェクトの位置" dim size={13}>{SearchIcon}</IconButton>
          <IconButton label="クリッピングマスク" dim size={13}>
            <path d="M2 2h11v11H2z" />
            <path {...solid} d="M6 6h7v7H6z" />
            <path d="M14 6h4v12H6v-3" />
          </IconButton>
          <IconButton label="新規サブレイヤー" size={16}>
            <path d="M8 4h11v12H8zM13.500 7v6M10.500 10h6" />
            <path d="M1 1v6h3" strokeWidth="1.600" />
            <path {...solid} d="M3 3.500L7 7l-4 3.500z" />
          </IconButton>
          <IconButton label="新規レイヤー" size={14}>{PlusBox}</IconButton>
          <IconButton label="レイヤーを削除" dim size={13}>{TrashIcon}</IconButton>
        </div>
      </div>
    </section>
  );
}

export default function App() {
  return (
    <div className="flex h-screen flex-col overflow-hidden bg-[#535353] font-['Noto_Sans_CJK_JP',sans-serif]">
      <TitleBar />
      <div className="mb-[3px] ml-1 mr-[3px] flex min-h-0 flex-1 flex-col border border-[#3b3b3b]">
        <ControlBar />
        <div className="flex min-h-0 flex-1">
          <Toolbox />
          <div className="w-[3px] shrink-0 border-x border-[#3b3b3b] bg-[#494949]" />
          <DocumentArea />
          <div className="w-[3px] shrink-0 border-x border-[#3b3b3b] bg-[#494949]" />
          <Dock />
          <div className="w-[3px] shrink-0 border-x border-[#3b3b3b] bg-[#494949]" />
          <aside className="flex w-[240px] shrink-0 flex-col">
            <div className="flex h-[13px] shrink-0 items-center justify-end border-b border-[#3b3b3b] bg-[#424242] pr-[6px]">
              <DoubleArrow />
            </div>
            <ColorPanel />
            <SwatchPanel />
            <ColorGuidePanel />
            <BrushPanel />
            <LayersPanel />
          </aside>
        </div>
      </div>
    </div>
  );
}
